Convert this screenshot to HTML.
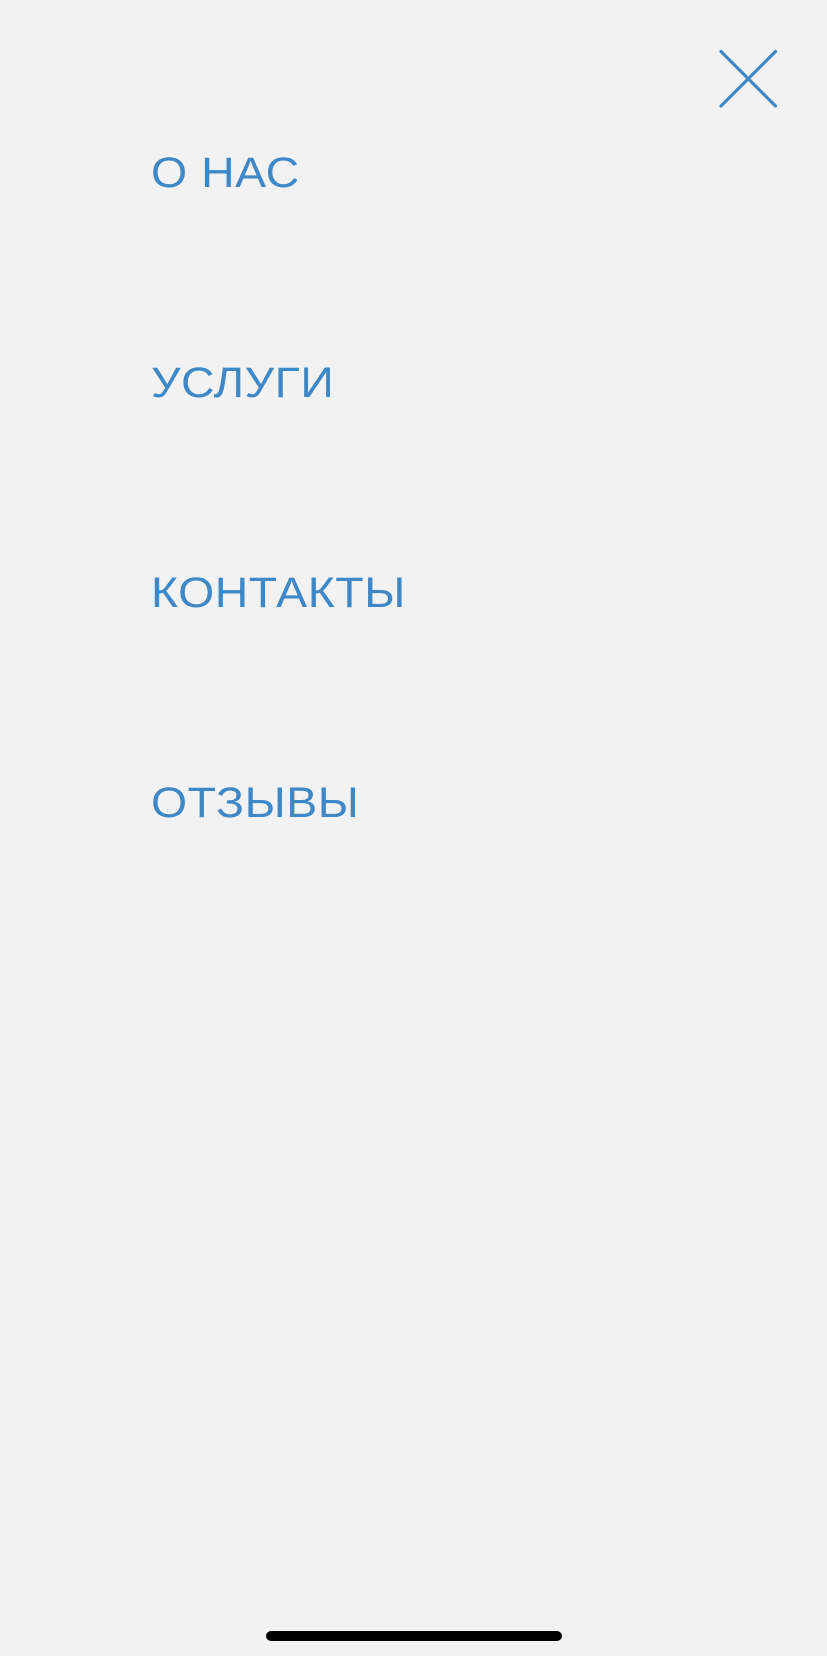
<!DOCTYPE html>
<html><head><meta charset="utf-8"><style>
html,body{margin:0;padding:0;}
body{width:827px;height:1656px;background:#f2f2f2;position:relative;overflow:hidden;font-family:"Liberation Sans","DejaVu Sans",sans-serif;}
.t{position:absolute;left:151px;color:#3f88c7;font-size:43px;line-height:1;letter-spacing:0.5px;white-space:nowrap;transform:scaleX(1.08);transform-origin:0 0;}
.bar{position:absolute;left:266px;top:1631px;width:296px;height:10px;border-radius:5px;background:#000;}
</style></head><body>
<svg style="position:absolute;left:0;top:0" width="827" height="200">
<path d="M721 51.5 L775.5 106 M775.5 51.5 L721 106" stroke="#3f88c7" stroke-width="3.2" stroke-linecap="round" fill="none"/>
</svg>
<div class="t" style="top:152px">О НАС</div>
<div class="t" style="top:362px">УСЛУГИ</div>
<div class="t" style="top:572px">КОНТАКТЫ</div>
<div class="t" style="top:782px">ОТЗЫВЫ</div>
<div class="bar"></div>
</body></html>
